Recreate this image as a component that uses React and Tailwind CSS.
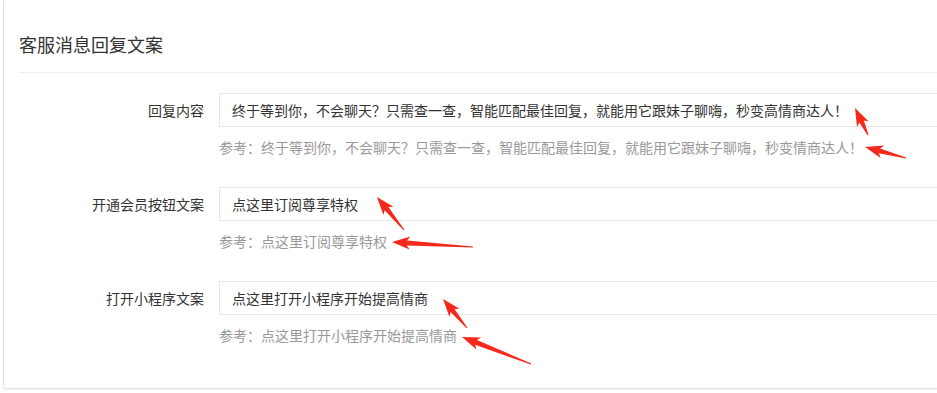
import React from "react";

const rows = [
    {
        label: "回复内容",
        value: "终于等到你，不会聊天？只需查一查，智能匹配最佳回复，就能用它跟妹子聊嗨，秒变高情商达人！",
        hint: "参考：终于等到你，不会聊天？只需查一查，智能匹配最佳回复，就能用它跟妹子聊嗨，秒变情商达人！",
    },
    {
        label: "开通会员按钮文案",
        value: "点这里订阅尊享特权",
        hint: "参考：点这里订阅尊享特权",
    },
    {
        label: "打开小程序文案",
        value: "点这里打开小程序开始提高情商",
        hint: "参考：点这里打开小程序开始提高情商",
    },
];

// annotation arrows: [tipX, tipY, tailX, tailY]
const arrows = [
    [855, 108, 868, 135],
    [865, 147, 906, 158],
    [377, 197, 404, 230],
    [392, 242, 473, 247],
    [443, 299, 467, 328],
    [462, 337, 531, 364],
];

function arrowPoints([tx, ty, sx, sy]) {
    const len = Math.hypot(tx - sx, ty - sy);
    const dx = (tx - sx) / len;
    const dy = (ty - sy) / len;
    const nx = -dy;
    const ny = dx;
    const head = 15;
    const neckX = tx - dx * head;
    const neckY = ty - dy * head;
    const barbX = neckX - dx * 3;
    const barbY = neckY - dy * 3;
    const pts = [
        [sx + nx * 0.5, sy + ny * 0.5],
        [neckX + nx * 2.5, neckY + ny * 2.5],
        [barbX + nx * 6.5, barbY + ny * 6.5],
        [tx, ty],
        [barbX - nx * 6.5, barbY - ny * 6.5],
        [neckX - nx * 2.5, neckY - ny * 2.5],
        [sx - nx * 0.5, sy - ny * 0.5],
    ];
    return pts.map((p) => p[0].toFixed(1) + "," + p[1].toFixed(1)).join(" ");
}

export default function App() {
    return (
        <div className="relative w-[937px] h-[393px] overflow-hidden bg-white pl-[3px] text-[#333]"
            style={{ fontFamily: '"Noto Sans CJK SC", "Noto Sans", sans-serif' }}>
            <div className="border-l border-b border-[#e2e2e2] rounded-bl-[4px] shadow-[0_1px_2px_rgba(0,0,0,0.06)] pb-[43px]">
                <div className="ml-[15px] pt-[31px] pb-[15px] border-b border-[#eeeeee]">
                    <h2 className="text-[18px] leading-[26px]">客服消息回复文案</h2>
                </div>

                <div className="pt-[20px] px-[15px]">
                    {rows.map((row, i) => (
                        <div key={i} className={i < rows.length - 1 ? "mb-[30px]" : ""}>
                            <div className="flex items-center">
                                <label className="w-[200px] shrink-0 pr-[15px] text-right text-[14px] leading-[20px]">
                                    {row.label}
                                </label>
                                <div className="flex-1 h-[34px] border border-[#e6e6e6] -mr-[40px] flex items-center pl-[12px] text-[14px]">
                                    {row.value}
                                </div>
                            </div>
                            <div className="ml-[200px] mt-[10px] text-[14px] leading-[20px] text-[#999]">
                                {row.hint}
                            </div>
                        </div>
                    ))}
                </div>
            </div>

            <svg className="absolute inset-0 pointer-events-none" width="937" height="393">
                {arrows.map((a, i) => (
                    <polygon key={i} points={arrowPoints(a)} fill="#f5291b" />
                ))}
            </svg>
        </div>
    );
}
